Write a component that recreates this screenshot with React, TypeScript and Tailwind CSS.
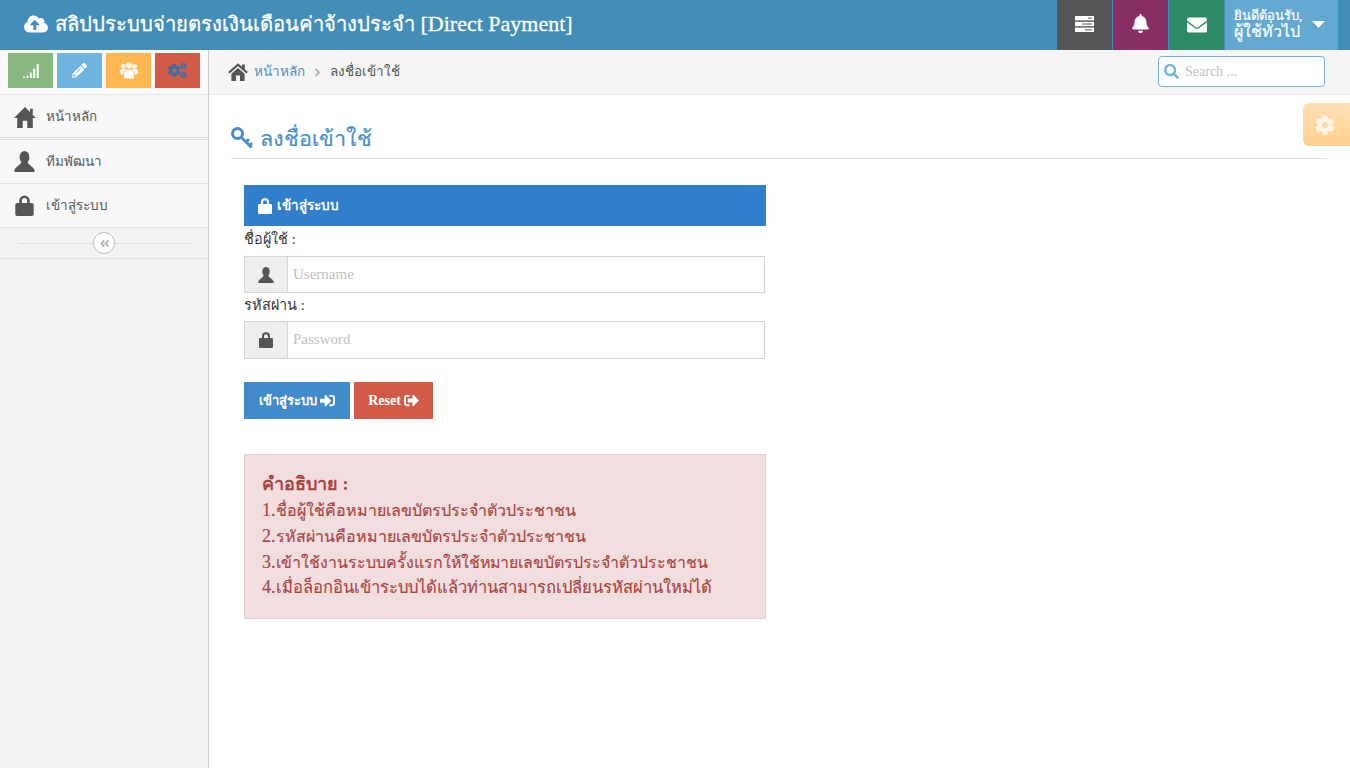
import React from 'react';
import {
  FaAngleDoubleLeft,
  FaAngleRight,
  FaBell,
  FaCloudUploadAlt,
  FaCog,
  FaCogs,
  FaEnvelope,
  FaPencilAlt,
  FaSearch,
  FaSignInAlt,
  FaSignOutAlt,
} from 'react-icons/fa';

const font = "font-['Liberation_Serif','Noto_Sans',serif]";

const HomeGlyph: React.FC<{ size: number }> = ({ size }) => (
  <svg width={size} height={size} viewBox="0 0 24 24" fill="currentColor">
    <path d="M12 1 L24 13 H20.5 V24 H14.5 V16 H9.5 V24 H3.5 V13 H0 Z" />
    <rect x="17.5" y="3" width="3" height="6" />
  </svg>
);

const CrumbHome: React.FC = () => (
  <svg width="20" height="20" viewBox="0 0 20 20" fill="currentColor">
    <path d="M0.8 10.8 L10 2.6 L19.2 10.8" fill="none" stroke="currentColor" strokeWidth="2.2" />
    <path d="M3.4 11.8 L10 6 L16.6 11.8 V19 H12 V13.5 H8 V19 H3.4 Z" />
    <rect x="14" y="2.5" width="2.8" height="5" />
  </svg>
);

const UserGlyph: React.FC<{ size: number }> = ({ size }) => (
  <svg width={size} height={size} viewBox="0 0 24 24" fill="currentColor">
    <ellipse cx="12" cy="7" rx="5.6" ry="7" />
    <path d="M8.5 12 C8.5 16 1.5 17.5 0.5 22 V24 H23.5 V22 C22.5 17.5 15.5 16 15.5 12 Z" />
  </svg>
);

const LockGlyph: React.FC<{ size: number }> = ({ size }) => (
  <svg width={size} height={size} viewBox="0 0 24 24" fill="currentColor">
    <path
      fillRule="evenodd"
      d="M6 9 V6.5 a6 6 0 0 1 12 0 V9 h2.5 a2 2 0 0 1 2 2 V22 a2 2 0 0 1 -2 2 H3.5 a2 2 0 0 1 -2 -2 V11 a2 2 0 0 1 2 -2 Z M9 9 h6 V6.5 a3 3 0 0 0 -6 0 Z"
    />
  </svg>
);

const KeyGlyph: React.FC = () => (
  <svg width="22" height="22" viewBox="0 0 22 22" fill="none" stroke="currentColor" strokeWidth="3">
    <circle cx="6.5" cy="6.5" r="5" />
    <path d="M10 10 L20.5 20.5 M15 15 L18 12 M18.5 18.5 L21 16" />
  </svg>
);

const TasksGlyph: React.FC = () => (
  <svg width="19" height="16" viewBox="0 0 19 16">
    <rect x="0" y="0" width="19" height="4.4" fill="#fff" />
    <rect x="0" y="5.8" width="19" height="4.4" fill="#fff" />
    <rect x="0" y="11.6" width="19" height="4.4" fill="#fff" />
    <rect x="13" y="1.5" width="4" height="1.4" fill="#888" />
    <rect x="7" y="7.3" width="10" height="1.4" fill="#888" />
    <rect x="10" y="13.1" width="7" height="1.4" fill="#888" />
  </svg>
);

const SignalGlyph: React.FC = () => (
  <svg width="16" height="14" viewBox="0 0 16 14" fill="#fff">
    <rect x="0" y="12.6" width="2" height="1.4" />
    <rect x="3.4" y="11.4" width="2" height="2.6" />
    <rect x="6.8" y="8.6" width="2" height="5.4" />
    <rect x="10.2" y="4.6" width="2" height="9.4" />
    <rect x="13.6" y="0" width="2.2" height="14" />
  </svg>
);

const GroupGlyph: React.FC = () => (
  <svg width="18" height="17" viewBox="0 0 18 17" fill="#fff">
    <circle cx="3.4" cy="4.4" r="2.4" />
    <circle cx="14.6" cy="4.4" r="2.4" />
    <rect x="0" y="7" width="18" height="5.5" rx="2.5" />
    <circle cx="9" cy="3.4" r="3.4" stroke="#ffb752" strokeWidth="0.8" />
    <path d="M3.6 11 a3.4 3.4 0 0 1 3.4 -3.4 h4 a3.4 3.4 0 0 1 3.4 3.4 v6 h-10.8 Z" stroke="#ffb752" strokeWidth="0.8" />
  </svg>
);

const navItems = [
  { label: 'หน้าหลัก', icon: <HomeGlyph size={22} />, cls: 'h-[45px] pt-px border-b-[3px] border-double border-[#dcdcdc]' },
  { label: 'ทีมพัฒนา', icon: <UserGlyph size={21} />, cls: 'h-[44px] border-b border-[#e5e5e5]' },
  { label: 'เข้าสู่ระบบ', icon: <LockGlyph size={21} />, cls: 'h-[44px] border-b border-[#e5e5e5]' },
];

const tips = [
  { n: '1.', t: 'ชื่อผู้ใช้คือหมายเลขบัตรประจำตัวประชาชน', cls: 'text-[16.05px]' },
  { n: '2.', t: 'รหัสผ่านคือหมายเลขบัตรประจำตัวประชาชน', cls: 'text-[16px]' },
  { n: '3.', t: 'เข้าใช้งานระบบครั้งแรกให้ใช้หมายเลขบัตรประจำตัวประชาชน', cls: 'text-[15.9px]' },
  { n: '4.', t: 'เมื่อล็อกอินเข้าระบบได้แล้วท่านสามารถเปลี่ยนรหัสผ่านใหม่ได้', cls: 'text-[16.55px]' },
];

const Sidebar: React.FC = () => (
  <div className="w-[209px] shrink-0 bg-[#f2f2f2] border-r border-[#cccccc] flex flex-col">
    <div className="h-[45px] flex gap-1 pl-2 pt-[3px] border-b border-[#e5e5e5] bg-[#fafafa]">
      <div className="w-[45px] h-[35px] bg-[#87b87f] flex items-center justify-center"><SignalGlyph /></div>
      <div className="w-[45px] h-[35px] bg-[#6fb3e0] flex items-center justify-center text-white"><FaPencilAlt size={15} /></div>
      <div className="w-[45px] h-[35px] bg-[#ffb752] flex items-center justify-center"><GroupGlyph /></div>
      <div className="w-[45px] h-[35px] bg-[#d15b47] flex items-center justify-center text-[#3a6ea5]"><FaCogs size={19} /></div>
    </div>
    {navItems.map((n) => (
      <div key={n.label} className={`${n.cls} bg-[#f8f8f8] flex items-center text-[13.5px] text-[#585858]`}>
        <span className="w-[46px] pl-[14px] text-[#555555] shrink-0">{n.icon}</span>
        <span className="pt-px">{n.label}</span>
      </div>
    ))}
    <div className="h-[31px] border-b border-[#e0e0e0] flex items-center justify-center relative">
      <div className="w-[173px] border-t border-[#e0e0e0]" />
      <span className="absolute w-[22px] h-[22px] rounded-full bg-white border border-[#bbbbbb] text-[#aaaaaa] flex items-center justify-center">
        <FaAngleDoubleLeft size={11} />
      </span>
    </div>
  </div>
);

const Field: React.FC<{ label: string; placeholder: string; icon: React.ReactNode; cls: string; inputCls: string; textCls: string }> = ({
  label,
  placeholder,
  icon,
  cls,
  inputCls,
  textCls,
}) => (
  <div className={cls}>
    <div className="text-[14.5px] leading-[20px] text-[#393939]">{label}</div>
    <div className={`${inputCls} w-[521px] flex border border-[#d5d5d5]`}>
      <div className="w-[43px] bg-[#eeeeee] border-r border-[#d5d5d5] flex items-center justify-center text-[#555555]">{icon}</div>
      <div className={`${textCls} flex-1 flex items-center pl-[5px] text-[15px] text-[#c0c0c0]`}>{placeholder}</div>
    </div>
  </div>
);

export default function App() {
  return (
    <div className={`w-[1350px] h-[768px] overflow-hidden flex flex-col bg-white ${font}`}>
      <div className="h-[50px] shrink-0 bg-[#438eb9] flex items-center text-white">
        <div className="flex items-center pl-6 pb-[3px] gap-[7px] text-[22px] flex-1 [-webkit-text-stroke:0.3px_#ffffff]">
          <FaCloudUploadAlt size={24} />
          <span>
            <span className="text-[20.25px]">สลิปประบบจ่ายตรงเงินเดือนค่าจ้างประจำ</span> [Direct Payment]
          </span>
        </div>
        <div className="flex h-full gap-px mr-3">
          <div className="w-[55px] bg-[#555555] flex items-center justify-center pb-[3px]"><TasksGlyph /></div>
          <div className="w-[55px] bg-[#892e65] flex items-center justify-center pb-[3px]"><FaBell size={19} /></div>
          <div className="w-[55px] bg-[#2e8965] flex items-center justify-center pb-[1px]"><FaEnvelope size={20} /></div>
          <div className="w-[113px] bg-[#62a8d1] flex items-center pl-[9px]">
            <div className="leading-[16px] text-[13px] w-[78px] mb-[3px] [-webkit-text-stroke:0.2px_#ffffff]">
              <div>ยินดีต้อนรับ,</div>
              <div className="text-[16px]">ผู้ใช้ทั่วไป</div>
            </div>
            <svg width="13" height="7" viewBox="0 0 13 7" fill="#fff" className="mb-[2px]">
              <polygon points="0,0 13,0 6.5,7" />
            </svg>
          </div>
        </div>
      </div>

      <div className="flex flex-1 min-h-0">
        <Sidebar />
        <div className="flex-1 flex flex-col relative">
          <div className="h-[45px] shrink-0 bg-[#f5f5f5] border-b border-[#e5e5e5] flex items-center pl-[19px] pr-[25px] text-[13.5px]">
            <span className="text-[#555555]"><CrumbHome /></span>
            <span className="ml-[6px] pt-px text-[#4c8fbd]">หน้าหลัก</span>
            <FaAngleRight size={13} className="mx-[6px] text-[#b2b6bf]" />
            <span className="pt-px text-[#555555]">ลงชื่อเข้าใช้</span>
            <div className="ml-auto w-[167px] h-[31px] mb-px rounded border border-[#6fb3e0] bg-white flex items-center pl-[5px] gap-[6px] text-[14px] text-[#c0c0c0]">
              <FaSearch size={15} className="text-[#6fb3e0]" />
              <span>Search ...</span>
            </div>
          </div>

          <div className="absolute right-0 top-[53px] w-[47px] h-[43px] pr-[3px] rounded-l-md bg-gradient-to-b from-[#ffe0b3] to-[#ffd08e] flex items-center justify-center text-[#fff5e8]">
            <FaCog size={20} />
          </div>

          <div className="pl-[22px] pr-[23px] pt-[29px]">
            <div className="h-[35px] border-b border-[#d5e3ef] flex items-start gap-[7px] text-[21.6px] leading-[30px] text-[#478fca] [-webkit-text-stroke:0.2px_#478fca]">
              <span className="mt-[3px]"><KeyGlyph /></span>
              <span>ลงชื่อเข้าใช้</span>
            </div>
          </div>

          <div className="ml-[35px] mt-[26px] w-[522px]">
            <div className="h-[41px] bg-[#307ecc] text-white text-[13.5px] font-bold flex items-center pl-[13px] gap-[4px]">
              <LockGlyph size={16} />
              <span className="pt-px">เข้าสู่ระบบ</span>
            </div>
            <Field label="ชื่อผู้ใช้ :" placeholder="Username" icon={<UserGlyph size={16} />} cls="mt-[3px]" inputCls="h-[37px] mt-[7px]" textCls="" />
            <Field label="รหัสผ่าน :" placeholder="Password" icon={<LockGlyph size={16} />} cls="mt-[2px]" inputCls="h-[38px] mt-[6px]" textCls="pb-[2px]" />
            <div className="flex gap-1 mt-[23px] text-white font-bold">
              <div className="w-[106px] h-[37px] bg-[#428bca] flex items-center justify-center gap-[3px] text-[13px]">
                เข้าสู่ระบบ <FaSignInAlt size={15} />
              </div>
              <div className="w-[79px] h-[37px] bg-[#d15b47] flex items-center justify-center gap-[3px] text-[14px]">
                Reset <FaSignOutAlt size={15} />
              </div>
            </div>
            <div className="mt-[35px] h-[165px] bg-[#f2dede] border border-[#ebccd1] text-[#a94442] px-[17px] pt-[16px] text-[18px] leading-[26px]">
              <div className="font-bold">คำอธิบาย :</div>
              {tips.map((t) => (
                <div key={t.n} className="whitespace-nowrap h-[25.75px] [-webkit-text-stroke:0.15px_#a94442]">
                  {t.n}
                  <span className={t.cls}>{t.t}</span>
                </div>
              ))}
            </div>
          </div>
        </div>
      </div>
    </div>
  );
}
